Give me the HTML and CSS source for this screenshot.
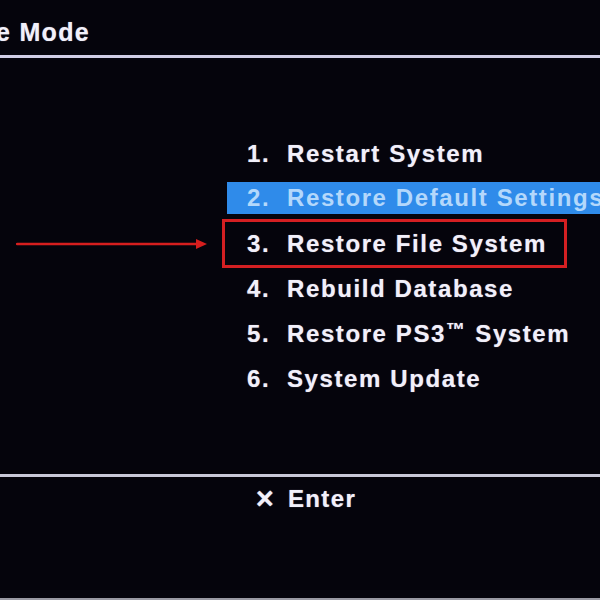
FILE: index.html
```html
<!DOCTYPE html>
<html>
<head>
<meta charset="utf-8">
<link rel="stylesheet" href="styles.css">
</head>
<body>
<div class="screen">
  <header class="top">
    <div class="title">e Mode</div>
  </header>
  <div class="rule"></div>
  <main class="main">
    <ol class="menu">
      <li class="item"><span class="num">1.</span><span>Restart System</span></li>
      <li class="item sel"><span class="num">2.</span><span>Restore Default Settings</span></li>
      <li class="item mark"><span class="num">3.</span><span>Restore File System</span>
        <svg class="arrow" width="200" height="12" viewBox="0 0 200 12"><line x1="1" y1="6" x2="186" y2="6" stroke="#d61e1e" stroke-width="2.4" stroke-linecap="round"/><polygon points="180,1 191,6 180,11" fill="#d61e1e"/></svg>
      </li>
      <li class="item"><span class="num">4.</span><span>Rebuild Database</span></li>
      <li class="item"><span class="num">5.</span><span>Restore PS3<span class="tm">™</span> System</span></li>
      <li class="item"><span class="num">6.</span><span>System Update</span></li>
    </ol>
  </main>
  <div class="rule rule2"></div>
  <footer class="foot">
    <span class="cross">×</span><span>Enter</span>
  </footer>
</div>
</body>
</html>
```
FILE: styles.css
```css
html, body {
  margin: 0;
  padding: 0;
  background: #05040c;
}
.screen {
  width: 600px;
  height: 600px;
  display: flex;
  flex-direction: column;
  background: #05040c;
  color: #f2f0fa;
  font-family: "Liberation Sans", Arial, sans-serif;
  font-weight: bold;
  overflow: hidden;
  box-sizing: border-box;
  border-bottom: 2px solid #9a9aa4;
  text-shadow: 0 0 1px rgba(230, 228, 255, 0.6);
}
.top {
  height: 55px;
  display: flex;
  align-items: flex-end;
}
.title {
  font-size: 25px;
  letter-spacing: 1.3px;
  margin-left: -4px;
  padding-bottom: 10px;
  line-height: 25px;
}
.rule {
  height: 3px;
  background: #cfcde6;
  flex: none;
}
.main {
  height: 416px;
  flex: none;
}
.menu {
  list-style: none;
  margin: 73px 0 0 227px;
  padding: 0;
}
.item {
  position: relative;
  height: 45px;
  display: flex;
  align-items: center;
  padding-left: 20px;
  font-size: 24px;
  letter-spacing: 1.6px;
  white-space: nowrap;
}
.num {
  width: 40px;
  flex: none;
}
.sel {
  height: 32px;
  margin: 6px 0 7px;
  background: #2f8bea;
  color: #b4d8fb;
  text-shadow: none;
}
.mark::before {
  content: "";
  position: absolute;
  left: -5px;
  right: 33px;
  top: -2px;
  bottom: -2px;
  border: 3px solid #d41f22;
}
.arrow {
  position: absolute;
  left: -211px;
  top: 17px;
}
.tm {
  font-size: 19px;
  vertical-align: 6px;
  letter-spacing: 0;
  margin-right: 2px;
}
.rule2 {
  background: #c9c8d8;
}
.foot {
  display: flex;
  justify-content: center;
  align-items: center;
  gap: 14px;
  height: 44px;
  font-size: 24px;
  letter-spacing: 1.4px;
  padding-left: 12px;
}
.cross {
  font-size: 31px;
  letter-spacing: 0;
}
```
